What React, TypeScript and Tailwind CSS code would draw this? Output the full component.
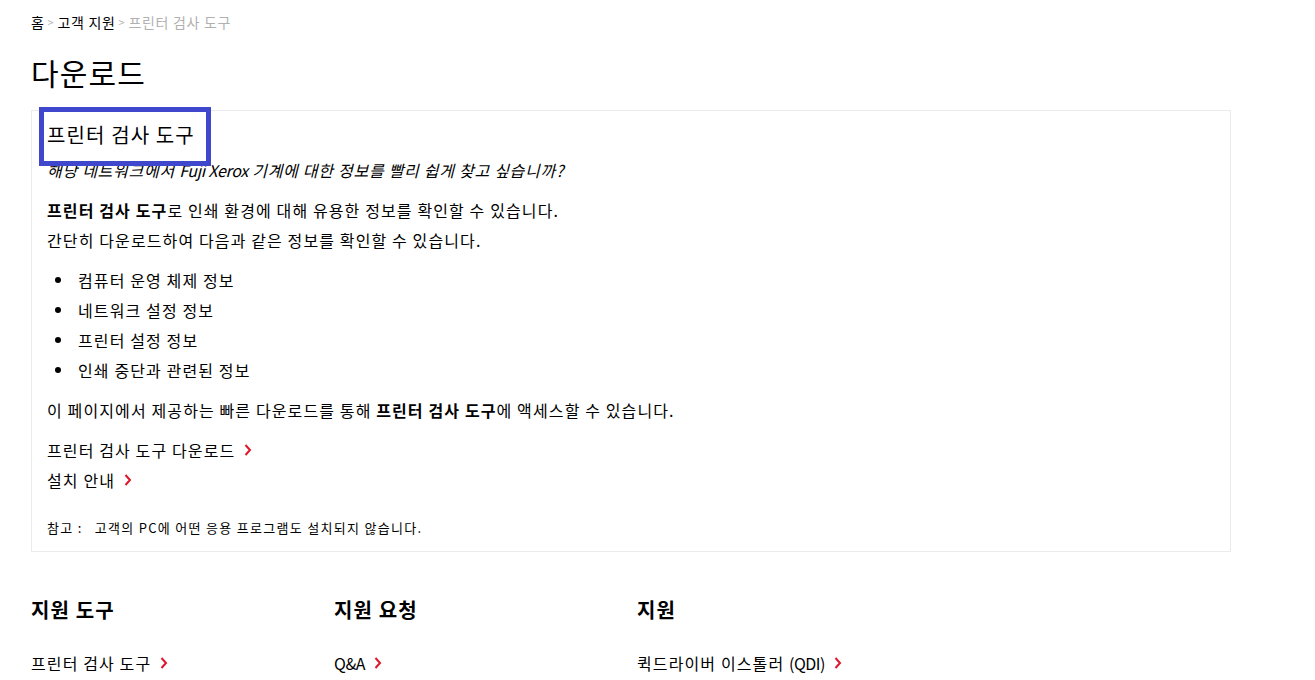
import type { ReactNode } from 'react';

const FONT = '[font-family:"Noto_Sans_CJK_KR","Noto_Sans",sans-serif]';

const BULLETS = ['컴퓨터 운영 체제 정보', '네트워크 설정 정보', '프린터 설정 정보', '인쇄 중단과 관련된 정보'];

const FOOTER: { title: string; link: ReactNode }[] = [
  { title: '지원 도구', link: '프린터 검사 도구' },
  { title: '지원 요청', link: <span className="tracking-[-0.03em]">Q&amp;A</span> },
  {
    title: '지원',
    link: (
      <>
        퀵드라이버 이스톨러 <span className="tracking-[-0.03em]">(QDI)</span>
      </>
    ),
  },
];

function Chevron() {
  return (
    <svg width="8" height="12" viewBox="0 0 8 12" className="ml-[9px] shrink-0">
      <path d="M1.5 1 L6 6 L1.5 11" fill="none" stroke="#e0162b" strokeWidth="2" />
    </svg>
  );
}

function LinkRow({ children, className = '' }: { children: ReactNode; className?: string }) {
  return (
    <a href="#" className={`flex items-center text-[16px] leading-[30px] text-black ${className}`}>
      <span>{children}</span>
      <Chevron />
    </a>
  );
}

export default function App() {
  return (
    <div className={`${FONT} tracking-[0.07em] bg-white text-black min-h-[680px] pl-[31px]`}>
      {/* Breadcrumb */}
      <nav className="pt-3 text-[14px] leading-5 flex items-center tracking-[0.05em]">
        <span>홈</span>
        <span className="mx-[3px] text-[11px] text-[#b5b5b5]">&gt;</span>
        <span>고객 지원</span>
        <span className="mx-[3px] text-[11px] text-[#b5b5b5]">&gt;</span>
        <span className="text-[#b0b0b0]">프린터 검사 도구</span>
      </nav>

      <h1 className="mt-5 text-[30px] leading-10 font-normal">다운로드</h1>

      {/* Content box */}
      <section className="relative mt-[18px] w-[1200px] border border-[#ebebeb] px-[15px] pt-[9px] pb-[13px]">
        <h2 className="text-[20px] leading-[30px] font-normal">프린터 검사 도구</h2>
        <div className="absolute left-[7px] top-[-4px] w-[172px] h-[59px] border-[5px] border-[#3f48cc]" />

        <p className="mt-[8px] text-[16px] leading-6 italic tracking-[0.045em]">
          해당 네트워크에서 <span className="tracking-[-0.02em]">Fuji Xerox</span> 기계에 대한 정보를 빨리 쉽게 찾고 싶습니까?
        </p>

        <p className="mt-[13px] text-[16px] leading-[30px]">
          <b>프린터 검사 도구</b>로 인쇄 환경에 대해 유용한 정보를 확인할 수 있습니다.
          <br />
          간단히 다운로드하여 다음과 같은 정보를 확인할 수 있습니다.
        </p>

        <ul className="mt-[10px]">
          {BULLETS.map((b) => (
            <li key={b} className="flex items-center text-[16px] leading-[30px]">
              <span className="ml-[8px] mr-[17px] w-[6px] h-[6px] rounded-full bg-black" />
              {b}
            </li>
          ))}
        </ul>

        <p className="mt-[10px] text-[16px] leading-[30px]">
          이 페이지에서 제공하는 빠른 다운로드를 통해 <b>프린터 검사 도구</b>에 액세스할 수 있습니다.
        </p>

        <div className="mt-[10px]">
          <LinkRow>프린터 검사 도구 다운로드</LinkRow>
          <LinkRow>설치 안내</LinkRow>
        </div>

        <p className="mt-[23px] text-[13px] leading-5 tracking-[0.1em]">
          참고 :<span className="ml-[12px]">고객의 PC에 어떤 응용 프로그램도 설치되지 않습니다.</span>
        </p>
      </section>

      {/* Footer links */}
      <div className="mt-[43px] grid grid-cols-[303px_303px_303px]">
        {FOOTER.map((col) => (
          <div key={col.title}>
            <h3 className="text-[20px] leading-[30px] font-bold">{col.title}</h3>
            <LinkRow className="mt-[23px]">{col.link}</LinkRow>
          </div>
        ))}
      </div>
    </div>
  );
}
